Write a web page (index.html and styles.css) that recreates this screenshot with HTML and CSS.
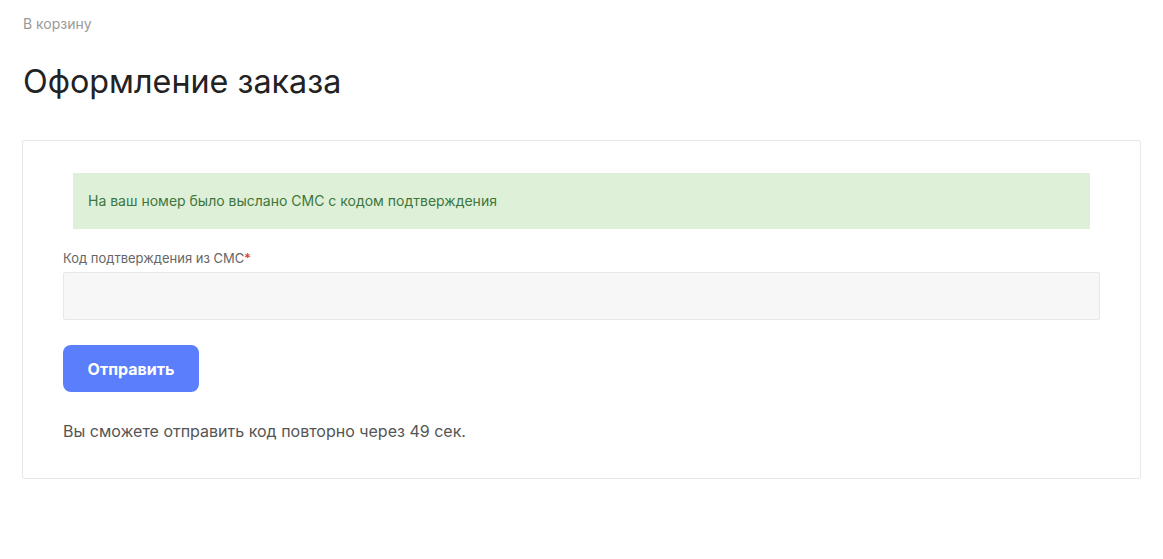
FILE: index.html
```html
<!DOCTYPE html>
<html lang="ru">
<head>
<meta charset="utf-8">
<title>Оформление заказа</title>
<link rel="stylesheet" href="styles.css">
</head>
<body>
<div class="page">
  <div class="breadcrumbs"><a href="#" class="crumb">В корзину</a></div>
  <h1 class="title">Оформление заказа</h1>
  <div class="card">
    <div class="alert">На ваш номер было выслано СМС с кодом подтверждения</div>
    <label class="label" for="code">Код подтверждения из СМС<span class="req">*</span></label>
    <input class="input" id="code" type="text">
    <button class="btn" type="button">Отправить</button>
    <p class="note">Вы сможете отправить код повторно через 49 сек.</p>
  </div>
</div>
</body>
</html>
```
FILE: styles.css
```css
* { box-sizing: border-box; }
html, body { margin: 0; padding: 0; background: #fff; }
body { font-family: Inter, "Noto Sans", sans-serif; color: #222; }
.page { padding: 15px 22px 0 22px; }
.breadcrumbs { font-size: 14px; line-height: 18px; }
.crumb { color: #999; text-decoration: none; margin-left: 1px; }
.title {
  margin: 29px 0 0 1px;
  font-size: 32.3px;
  font-weight: 400;
  line-height: 40px;
  color: #222;
}
.card {
  margin-top: 38px;
  width: 1119px;
  border: 1px solid #e8e8e8;
  border-radius: 2px;
  padding: 32px 40px 36px 40px;
  display: flex;
  flex-direction: column;
  align-items: flex-start;
}
.alert {
  align-self: stretch;
  margin: 0 10px;
  background: #dff0d8;
  color: #3c763d;
  font-size: 14px;
  line-height: 20px;
  padding: 18px 15px;
}
.label {
  margin-top: 20px;
  font-size: 13px;
  line-height: 18px;
  color: #666;
}
.req { color: #e02b27; }
.input {
  margin-top: 5px;
  align-self: stretch;
  height: 48px;
  background: #f7f7f7;
  border: 1px solid #e8e8e8;
  border-radius: 2px;
  outline: none;
  font-family: inherit;
  font-size: 15px;
  padding: 0 15px;
}
.btn {
  margin-top: 25px;
  width: 136px;
  height: 47px;
  border: none;
  border-radius: 8px;
  background: #5b7ffc;
  color: #fff;
  font-family: inherit;
  font-size: 16px;
  font-weight: 700;
  cursor: pointer;
}
.note {
  margin: 28px 0 0 0;
  font-size: 16px;
  line-height: 22px;
  color: #555;
}
```
